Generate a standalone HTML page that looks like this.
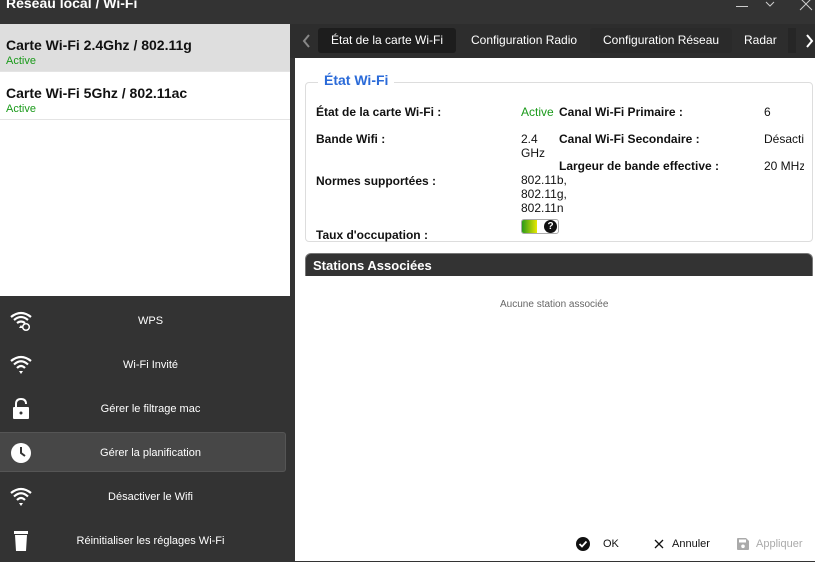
<!DOCTYPE html>
<html><head><meta charset="utf-8"><style>
*{margin:0;padding:0;box-sizing:border-box}
body{width:815px;height:561px;overflow:hidden;background:#333;font-family:"Liberation Sans","DejaVu Sans",sans-serif;position:relative}
.a{position:absolute}
.title{left:6px;top:-5px;color:#fff;font-weight:bold;font-size:14px}
.lp{left:0;top:24px;width:290px;height:272px;background:#fff}
.it{position:absolute;left:0;width:290px;height:48px;border-bottom:1px solid #e4e4e4}
.it b{position:absolute;left:6px;top:13px;font-size:14px;color:#111}
.it span{position:absolute;left:6px;top:31px;font-size:11px;color:#1a9a1a}
.menu{left:0;width:295px;height:40px;color:#fff;font-size:11px;text-align:center;line-height:42px;padding-left:6px}
.menu svg{position:absolute;left:10px;top:10px}
.tabs{left:290px;top:24px;width:525px;height:34px;background:#2d2d2d}
.tab{position:absolute;top:4px;height:25px;line-height:25px;color:#fff;font-size:12px;padding:0 13px;border-radius:3px}
.rp{left:295px;top:58px;width:520px;height:503px;background:#fff}
.fs{left:305px;top:82px;width:508px;height:160px;border:1px solid #ddd;border-radius:4px}
.lg{left:318px;top:72px;background:#fff;padding:0 6px;color:#2a6ad8;font-weight:bold;font-size:14px}
.l{font-weight:bold;font-size:12px;color:#111}
.v{font-size:12px;color:#111;line-height:14px}
</style></head><body>
<div class="a title">Réseau local / Wi-Fi</div>
<div class="a" style="left:736px;top:6px;width:12px;height:1px;background:#ccc"></div>
<svg class="a" style="left:764px;top:0" width="12" height="12"><path d="M2 2 L6 6 L10 2" stroke="#ccc" fill="none"/></svg>
<svg class="a" style="left:799px;top:0" width="14" height="12"><path d="M1 -2 L13 10 M13 -2 L1 10" stroke="#ccc"/></svg>
<div class="a lp">
 <div class="it" style="top:0;background:#dedede"><b>Carte Wi-Fi 2.4Ghz / 802.11g</b><span>Active</span></div>
 <div class="it" style="top:48px"><b>Carte Wi-Fi 5Ghz / 802.11ac</b><span>Active</span></div>
</div>
<div class="a menu" style="top:300px"><svg width="22" height="22"><path d="M1 7 Q11 -1 21 7 M4 10 Q11 4 18 10 M7 13 Q11 10 15 13" stroke="#fff" stroke-width="2.2" fill="none"/><path d="M9 18 L11 15 L13 18Z" fill="#fff"/><circle cx="16" cy="17" r="3.3" stroke="#fff" stroke-width="1.5" fill="none"/></svg>WPS</div>
<div class="a menu" style="top:344px"><svg width="22" height="22"><path d="M1 7 Q11 -1 21 7 M4 10.5 Q11 4 18 10.5 M7 14 Q11 10 15 14" stroke="#fff" stroke-width="2.2" fill="none"/><path d="M9 17 L11 20 L13 17Z" fill="#fff"/></svg>Wi-Fi Invité</div>
<div class="a menu" style="top:388px"><svg width="22" height="22"><path d="M6 10 V6 Q6 1 11 1 Q16 1 16 6" stroke="#fff" stroke-width="2" fill="none"/><rect x="3" y="9" width="16" height="12" rx="1" fill="#fff"/><circle cx="11" cy="15" r="1.5" fill="#333"/></svg>Gérer le filtrage mac</div>
<div class="a" style="left:0;top:432px;width:286px;height:40px;background:#474747;border:1px solid #555;border-left:none;border-radius:0 3px 3px 0"></div>
<div class="a menu" style="top:432px"><svg width="22" height="22"><circle cx="11" cy="11" r="10" fill="#fff"/><path d="M11 5 V11 L15 14" stroke="#333" stroke-width="2" fill="none"/></svg>Gérer la planification</div>
<div class="a menu" style="top:476px"><svg width="22" height="22"><path d="M1 7 Q11 -1 21 7 M4 10.5 Q11 4 18 10.5 M7 14 Q11 10 15 14" stroke="#fff" stroke-width="2.2" fill="none"/><path d="M9 17 L11 20 L13 17Z" fill="#fff"/></svg>Désactiver le Wifi</div>
<div class="a menu" style="top:520px"><svg width="22" height="22"><rect x="4" y="1" width="14" height="3" fill="#fff"/><path d="M5 5 H17 L16 21 H6Z" fill="#fff"/></svg>Réinitialiser les réglages Wi-Fi</div>

<div class="a tabs">
 <svg class="a" style="left:12px;top:10px" width="10" height="14"><path d="M7 1 L2 7 L7 13" stroke="#888" stroke-width="2" fill="none"/></svg>
 <div class="tab" style="left:28px;background:#1d1d1d">État de la carte Wi-Fi</div>
 <div class="tab" style="left:168px">Configuration Radio</div>
 <div class="tab" style="left:300px;background:#2a2a2a">Configuration Réseau</div>
 <div class="tab" style="left:441px">Radar</div>
 <div class="a" style="left:498px;top:4px;width:8px;height:25px;background:#262626"></div>
 <svg class="a" style="left:515px;top:10px" width="10" height="14"><path d="M2 1 L7 7 L2 13" stroke="#fff" stroke-width="2" fill="none"/></svg>
</div>
<div class="a rp"></div>
<div class="a fs"></div>
<div class="a lg">État Wi-Fi</div>
<div class="a l" style="left:316px;top:105px">État de la carte Wi-Fi :</div>
<div class="a v" style="left:521px;top:105px;color:#1a9a1a">Active</div>
<div class="a l" style="left:559px;top:105px">Canal Wi-Fi Primaire :</div>
<div class="a v" style="left:764px;top:105px">6</div>
<div class="a l" style="left:316px;top:132px">Bande Wifi :</div>
<div class="a v" style="left:521px;top:132px">2.4<br>GHz</div>
<div class="a l" style="left:559px;top:132px">Canal Wi-Fi Secondaire :</div>
<div class="a v" style="left:764px;top:132px;width:40px;overflow:hidden;white-space:nowrap">Désactivé</div>
<div class="a l" style="left:559px;top:159px">Largeur de bande effective :</div>
<div class="a v" style="left:764px;top:159px;width:40px;overflow:hidden;white-space:nowrap">20 MHz</div>
<div class="a l" style="left:316px;top:174px">Normes supportées :</div>
<div class="a v" style="left:521px;top:173px">802.11b,<br>802.11g,<br>802.11n</div>
<div class="a" style="left:521px;top:219px;width:38px;height:15px;border:1px solid #aaa;border-radius:3px;background:#fff;overflow:hidden"><div style="width:15px;height:13px;background:linear-gradient(90deg,#2a9a1a,#e8e800)"></div></div>
<div class="a" style="left:544px;top:220px;width:13px;height:13px;border-radius:50%;background:#111;color:#fff;font-size:10px;font-weight:bold;text-align:center;line-height:13px">?</div>
<div class="a l" style="left:316px;top:228px">Taux d'occupation :</div>
<div class="a" style="left:305px;top:253px;width:508px;height:23px;background:#333;border-radius:6px 6px 0 0;border:1px solid #777;border-bottom:none;color:#fff;font-weight:bold;font-size:13px;padding:4px 7px">Stations Associées</div>
<div class="a" style="left:500px;top:299px;font-size:10px;color:#666">Aucune station associée</div>
<svg class="a" style="left:576px;top:537px" width="14" height="14"><circle cx="7" cy="7" r="7" fill="#111"/><path d="M3.5 7 L6 9.5 L10.5 4.5" stroke="#fff" stroke-width="1.8" fill="none"/></svg>
<div class="a" style="left:603px;top:538px;font-size:11px;color:#111">OK</div>
<svg class="a" style="left:654px;top:539px" width="10" height="10"><path d="M1 1 L9 9 M9 1 L1 9" stroke="#111" stroke-width="1.3"/></svg>
<div class="a" style="left:672px;top:538px;font-size:11px;color:#111">Annuler</div>
<svg class="a" style="left:737px;top:538px" width="12" height="12"><path d="M0 1 Q0 0 1 0 H9 L12 3 V11 Q12 12 11 12 H1 Q0 12 0 11Z" fill="#aaa"/><rect x="2" y="1.5" width="7" height="3" fill="#fff"/><circle cx="6" cy="8.3" r="1.8" fill="#fff"/></svg>
<div class="a" style="left:756px;top:538px;font-size:11px;color:#aaa">Appliquer</div>
</body></html>
